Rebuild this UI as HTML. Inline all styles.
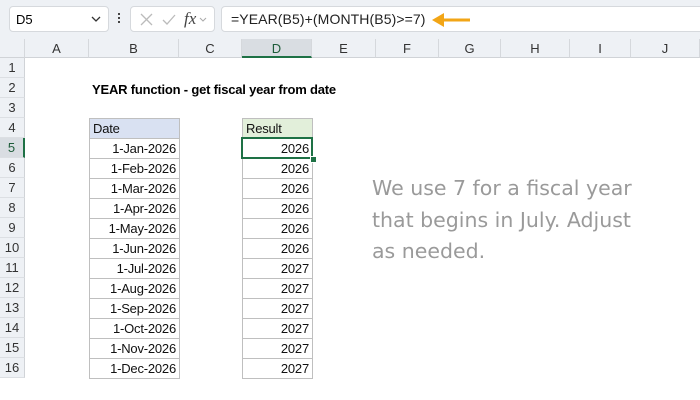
<!DOCTYPE html><html><head><style>
body{margin:0;width:700px;height:400px;overflow:hidden;background:#fff;font-family:"Liberation Sans",sans-serif;position:relative}
.a{position:absolute}
.top{left:0;top:0;width:700px;height:39px;background:#eef1f5}
.box{background:#fff;border:1px solid #d6d9dd;border-radius:4px}
.ch{top:39px;height:19px;background:#eef1f5;border-bottom:1px solid #d0d3d7;font-size:13px;color:#333;text-align:center;line-height:19px;border-right:1px solid #d5d8dc;box-sizing:border-box}
.rh{left:0;width:25px;height:20px;background:#eef1f5;border-right:1px solid #d0d3d7;border-bottom:1px solid #dcdfe3;box-sizing:border-box;font-size:13px;color:#333;text-align:center;line-height:20px}
.c{height:21px;border:1px solid #bfbfbf;box-sizing:border-box;font-size:13px;line-height:19px;color:#111;padding:0 3px;text-align:right;letter-spacing:-0.2px}
</style></head><body>
<div class="a top"></div>
<div class="a box" style="left:9px;top:6px;width:98px;height:24px"></div>
<div class="a" style="left:16px;top:12px;font-size:13px">D5</div>
<svg class="a" style="left:90px;top:15px" width="12" height="8"><path d="M2 2l4 4 4-4" stroke="#333" fill="none" stroke-width="1.3"/></svg>
<div class="a" style="left:118px;top:13px;width:2px;height:2px;background:#444;box-shadow:0 4px #444,0 8px #444"></div>
<div class="a box" style="left:130px;top:6px;width:83px;height:24px"></div>
<svg class="a" style="left:138px;top:12px" width="70" height="16"><path d="M3 2l11 11M14 2L3 13" stroke="#bbb" stroke-width="1.3"/><path d="M25 8l4 4 8-9" stroke="#bbb" stroke-width="1.3" fill="none"/><path d="M62 6l3 3 3-3" stroke="#aaa" fill="none"/></svg>
<div class="a" style="left:184px;top:9px;font-family:'Liberation Serif',serif;font-style:italic;font-size:17px;color:#444">fx</div>
<div class="a box" style="left:221px;top:6px;width:490px;height:24px"></div>
<div class="a" style="left:231px;top:11px;font-size:14px;color:#222;letter-spacing:0.1px">=YEAR(B5)+(MONTH(B5)&gt;=7)</div>
<svg class="a" style="left:432px;top:12px" width="40" height="16"><path d="M8 8H38" stroke="#f2a516" stroke-width="3"/><path d="M0 8L12 1V15Z" fill="#f2a516"/></svg>
<div class="a ch" style="left:0;width:25px"></div>
<div class="a ch" style="left:25px;width:64px">A</div>
<div class="a ch" style="left:89px;width:90px">B</div>
<div class="a ch" style="left:179px;width:63px">C</div>
<div class="a ch" style="left:242px;width:70px;background:#d9dde2;border-bottom:2px solid #1e7145;color:#1e5c3a">D</div>
<div class="a ch" style="left:312px;width:64px">E</div>
<div class="a ch" style="left:376px;width:63px">F</div>
<div class="a ch" style="left:439px;width:62px">G</div>
<div class="a ch" style="left:501px;width:69px">H</div>
<div class="a ch" style="left:570px;width:61px">I</div>
<div class="a ch" style="left:631px;width:69px">J</div>
<div class="a rh" style="top:58px">1</div><div class="a rh" style="top:78px">2</div><div class="a rh" style="top:98px">3</div><div class="a rh" style="top:118px">4</div>
<div class="a rh" style="top:138px;background:#d9dde2;border-right:2px solid #1e7145;color:#1e5c3a">5</div>
<div class="a rh" style="top:158px">6</div><div class="a rh" style="top:178px">7</div><div class="a rh" style="top:198px">8</div><div class="a rh" style="top:218px">9</div><div class="a rh" style="top:238px">10</div><div class="a rh" style="top:258px">11</div><div class="a rh" style="top:278px">12</div><div class="a rh" style="top:298px">13</div><div class="a rh" style="top:318px">14</div><div class="a rh" style="top:338px">15</div><div class="a rh" style="top:358px">16</div>
<div class="a" style="left:92px;top:82px;font-size:13px;font-weight:bold;letter-spacing:-0.2px">YEAR function - get fiscal year from date</div>
<div class="a c" style="left:89px;top:118px;width:91px;background:#d9e1f2;text-align:left">Date</div>
<div class="a c" style="left:242px;top:118px;width:71px;background:#e2efda;text-align:left">Result</div>
<div id="rows"></div>
<script>
var d=["1-Jan","1-Feb","1-Mar","1-Apr","1-May","1-Jun","1-Jul","1-Aug","1-Sep","1-Oct","1-Nov","1-Dec"],h="";
d.forEach(function(m,i){var t=138+i*20;h+='<div class="a c" style="left:89px;top:'+t+'px;width:91px">'+m+'-2026</div><div class="a c" style="left:242px;top:'+t+'px;width:71px">'+(i<6?2026:2027)+'</div>';});
document.getElementById("rows").innerHTML=h;
</script>
<div class="a" style="left:241px;top:137px;width:72px;height:22px;border:2px solid #1e7145;box-sizing:border-box"></div>
<div class="a" style="left:310px;top:156px;width:5px;height:5px;background:#1e7145;border:1px solid #fff"></div>
<div class="a" style="left:372px;top:173px;font-size:20.5px;color:#9a9a9a;line-height:31.5px;font-family:'DejaVu Sans',sans-serif">We use 7 for a fiscal year<br>that begins in July. Adjust<br>as needed.</div>
</body></html>
